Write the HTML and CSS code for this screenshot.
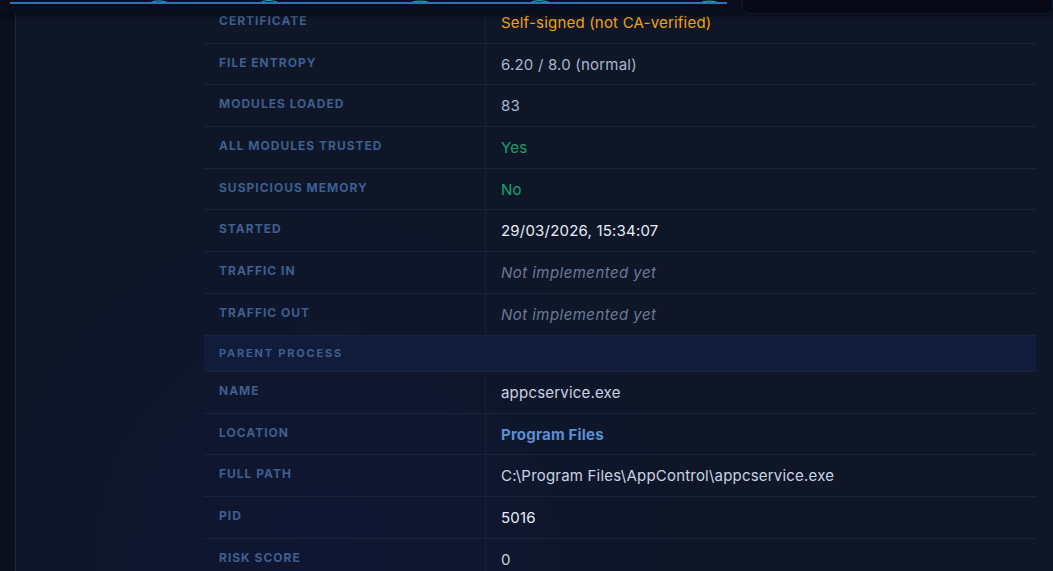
FILE: index.html
```html
<!DOCTYPE html>
<html lang="en">
<head>
  <meta charset="UTF-8" />
  <meta name="viewport" content="width=device-width, initial-scale=1.0" />
  <title>Process Details</title>
  <link rel="stylesheet" href="styles.css">
</head>
<body>

  <div class="topbar">
    <svg class="spark" viewBox="0 0 717 14" preserveAspectRatio="none">
      <path d="M140 3 C145 0 150 0 158 2.5 L250 3 C255 0 262 0 268 2.5 L400 3 C405 0.5 412 0.5 420 2.5 L520 3 C525 0 532 0 540 2.5 L690 3 C695 0.5 700 0.5 708 2.5"
        fill="none" stroke="#1a9ea6" stroke-width="1.2" />
      <line x1="0" y1="3" x2="717" y2="3" stroke="#2f6fc0" stroke-width="2" />
    </svg>
    <div class="side-card"></div>
  </div>

  <div class="app">
    <aside class="rail"></aside>

    <main class="content">
      <div class="details">
        <div class="row">
          <div class="label">Certificate</div>
          <div class="value warn">Self-signed (not CA-verified)</div>
        </div>
        <div class="row">
          <div class="label">File Entropy</div>
          <div class="value muted">6.20 / 8.0 (normal)</div>
        </div>
        <div class="row">
          <div class="label">Modules Loaded</div>
          <div class="value muted">83</div>
        </div>
        <div class="row">
          <div class="label">All Modules Trusted</div>
          <div class="value ok">Yes</div>
        </div>
        <div class="row">
          <div class="label">Suspicious Memory</div>
          <div class="value ok">No</div>
        </div>
        <div class="row">
          <div class="label">Started</div>
          <div class="value bright">29/03/2026, 15:34:07</div>
        </div>
        <div class="row">
          <div class="label">Traffic In</div>
          <div class="value na">Not implemented yet</div>
        </div>
        <div class="row">
          <div class="label">Traffic Out</div>
          <div class="value na">Not implemented yet</div>
        </div>

        <div class="section">Parent Process</div>

        <div class="row">
          <div class="label">Name</div>
          <div class="value">appcservice.exe</div>
        </div>
        <div class="row">
          <div class="label">Location</div>
          <div class="value link">Program Files</div>
        </div>
        <div class="row">
          <div class="label">Full Path</div>
          <div class="value">C:\Program Files\AppControl\appcservice.exe</div>
        </div>
        <div class="row">
          <div class="label">PID</div>
          <div class="value bright">5016</div>
        </div>
        <div class="row">
          <div class="label">Risk Score</div>
          <div class="value">0</div>
        </div>
      </div>
    </main>
  </div>

</body>
</html>
```

FILE: styles.css
```css
body {
  margin: 0;
  background-color: #0e1628;
  font-family: Inter, 'Noto Sans', sans-serif;
  color: #c9d4e4;
  overflow: hidden;
}

.topbar {
  position: absolute;
  top: 0;
  left: 0;
  right: 0;
  height: 14px;
  background-color: #0a0d1b;
  box-shadow: 0 2px 4px rgba(0, 0, 0, 0.45);
  z-index: 10;
}

.spark {
  position: absolute;
  left: 10px;
  top: 0;
  width: 717px;
  height: 14px;
}

.side-card {
  position: absolute;
  left: 742px;
  top: -20px;
  right: 0;
  height: 32px;
  background-color: #060915;
  border: 1px solid #121a2e;
  border-radius: 8px;
}

.app {
  display: flex;
  min-height: 571px;
}

.rail {
  width: 15px;
  background-color: #0a101d;
  border-right: 1px solid #17294a;
}

.content {
  flex: 1;
  padding: 2px 0 0 188px;
  background: radial-gradient(circle at 30% 95%, #101633 0%, #0e1628 40%);
}

.details {
  width: 832px;
}

.row {
  display: grid;
  grid-template-columns: 282px 1fr;
  height: 41.7px;
  border-bottom: 1px solid #19233a;
  box-sizing: border-box;
}

.label {
  display: flex;
  align-items: center;
  padding: 0 15px 4px;
  border-right: 1px solid #172036;
  font-size: 12px;
  font-weight: 700;
  letter-spacing: 1px;
  text-transform: uppercase;
  color: #3e5f8f;
}

.value {
  display: flex;
  align-items: center;
  padding: 0 15px;
  font-size: 15px;
  letter-spacing: 0.2px;
  color: #c9d4e4;
}

.value.muted {
  color: #a9b8cf;
}

.value.bright {
  color: #e6edf8;
}

.value.warn {
  color: #f2a20c;
}

.value.ok {
  color: #16a56f;
}

.value.na {
  font-style: italic;
  letter-spacing: 0.45px;
  color: #6b7a96;
}

.value.link {
  font-weight: 700;
  color: #5a8fd4;
}

.section {
  display: flex;
  align-items: center;
  height: 36.5px;
  padding: 0 15px;
  background-color: #111c3b;
  border-bottom: 1px solid #19233a;
  box-sizing: border-box;
  font-size: 11px;
  font-weight: 700;
  letter-spacing: 1.8px;
  text-transform: uppercase;
  color: #3e5f8f;
}
```
